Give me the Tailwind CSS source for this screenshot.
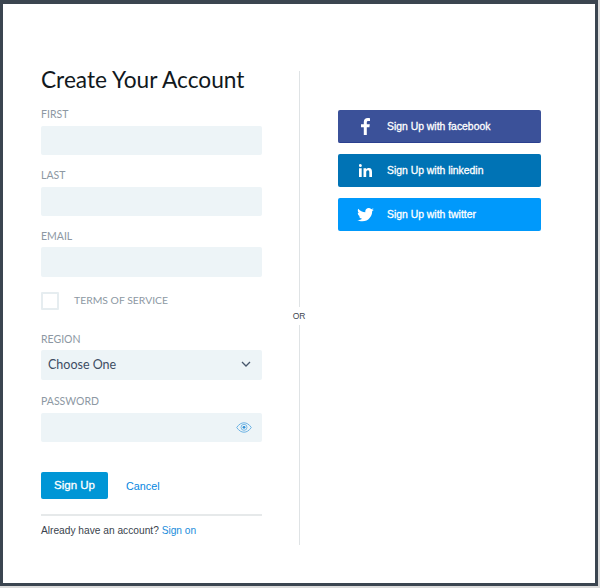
<!doctype html>
<html>
<head>
<meta charset="utf-8">
<title>Create Your Account</title>
<script src="https://cdn.jsdelivr.net/npm/@tailwindcss/browser@4"></script>
</head>
<body class="bg-[#dcdcdc] font-['Lato',sans-serif]">
<div class="w-[598px] h-[586px] border-x-[3px] border-t-4 border-b-[3px] border-[#3b4550] bg-white flex">
    <!-- form column -->
    <div class="w-[221px] ml-[38px] shrink-0">
        <h1 class="mt-[60px] h-[32px] leading-[32px] text-[22.700px] text-[#111820]">Create Your Account</h1>
        <label class="block mt-[11px] h-[15px] leading-[15px] text-[10.500px] text-[#8d98a3]">FIRST</label>
        <input type="text" class="block mt-[4px] w-full h-[29px] rounded-[2px] bg-[#edf4f7]">
        <label class="block mt-[13px] h-[15px] leading-[15px] text-[10.500px] text-[#8d98a3]">LAST</label>
        <input type="text" class="block mt-[4px] w-full h-[29px] rounded-[2px] bg-[#edf4f7]">
        <label class="block mt-[13px] h-[15px] leading-[15px] text-[10.500px] text-[#8d98a3]">EMAIL</label>
        <input type="text" class="block mt-[3px] w-full h-[30px] rounded-[2px] bg-[#edf4f7]">
        <div class="flex items-center mt-[15px] h-[18px]">
            <span class="w-[18px] h-[18px] border-2 border-[#e6edf0] rounded-[1px]"></span>
            <span class="ml-[15px] text-[10.400px] text-[#8d98a3]">TERMS OF SERVICE</span>
        </div>
        <label class="block mt-[22px] h-[15px] leading-[15px] text-[10.500px] text-[#8d98a3]">REGION</label>
        <div class="mt-[3px] h-[30px] rounded-[2px] bg-[#edf4f7] flex items-center justify-between pl-[7px] pr-[11px]">
            <span class="text-[12.500px] text-[#3d4d63]">Choose One</span>
            <svg width="10" height="6" viewBox="0 0 10 6" class="mb-[2px]"><path d="M1 1l4 4 4-4" fill="none" stroke="#46566b" stroke-width="1.3"/></svg>
        </div>
        <label class="block mt-[14px] h-[15px] leading-[15px] text-[10.500px] text-[#8d98a3]">PASSWORD</label>
        <div class="mt-[4px] h-[29px] rounded-[2px] bg-[#edf4f7] flex items-center justify-end pr-[10px]">
            <svg width="16" height="11" viewBox="0 0 16 11"><path d="M.7 5.500C3 2.200 5.400.8 8 .8s5 1.400 7.300 4.700C13 8.800 10.600 10.200 8 10.200S3 8.800.7 5.500z" fill="none" stroke="#6db3e4" stroke-width="1"/><circle cx="8" cy="5.300" r="3" fill="none" stroke="#6db3e4" stroke-width=".9"/><circle cx="8" cy="5.300" r="1.400" fill="#2f8fd6"/></svg>
        </div>
        <div class="flex items-center mt-[30px]">
            <button class="w-[67px] h-[27px] pt-px rounded-[2px] bg-[#0096d6] text-white text-[11.500px] [-webkit-text-stroke:0.3px_white] font-['Liberation_Sans',sans-serif]">Sign Up</button>
            <a class="ml-[18px] pt-px text-[#0587df] text-[10.800px] font-['Liberation_Sans',sans-serif]">Cancel</a>
        </div>
        <div class="mt-[15px] h-[2px] bg-[#e6e9ea]"></div>
        <p class="mt-[7px] text-[10.200px] leading-[15px] text-[#39434d] font-['Liberation_Sans',sans-serif]">Already have an account? <a class="text-[#1a8ddb]">Sign on</a></p>
    </div>
    <!-- divider -->
    <div class="w-[20px] ml-[27px] shrink-0 mt-[67px] h-[474px] flex flex-col items-center">
        <div class="w-px flex-1 bg-[#dfe3e5]"></div>
        <span class="py-[3px] text-[8.500px] leading-[12px] text-[#3d464f] font-['Liberation_Sans',sans-serif]">OR</span>
        <div class="w-px h-[220px] bg-[#dfe3e5]"></div>
    </div>
    <!-- social buttons -->
    <div class="w-[203px] ml-[29px] mt-[106px] flex flex-col gap-[11px] font-['Liberation_Sans',sans-serif] text-white text-[10.400px] [-webkit-text-stroke:0.3px_white]">
        <a class="h-[33px] rounded-[2px] bg-[#3b5199] border-b border-[#2a3f8f] flex items-center">
            <span class="w-[49px] flex justify-center pl-[6px]">
                <svg width="9" height="17" viewBox="0 0 9 17"><path d="M5.800 17V9.300h2.600l.4-3H5.800V4.400c0-.9.300-1.500 1.500-1.500H9V.2C8.700.1 7.700 0 6.700 0 4.400 0 2.800 1.400 2.800 4v2.300H0v3h2.800V17z" fill="#fff"/></svg>
            </span>
            <span class="mt-[2px]">Sign Up with facebook</span>
        </a>
        <a class="h-[33px] rounded-[2px] bg-[#0073b5] flex items-center">
            <span class="w-[49px] flex justify-center pl-[6px]">
                <svg width="13" height="13" viewBox="0 0 13 13"><path d="M0 4.300h2.700V13H0zM1.350 0a1.500 1.500 0 1 1 0 3 1.500 1.500 0 0 1 0-3zM4.500 4.300h2.600v1.200c.4-.8 1.400-1.400 2.800-1.400 2.600 0 3.100 1.700 3.100 4V13h-2.700V8.600c0-1 0-2.300-1.400-2.300s-1.700 1.100-1.700 2.200V13H4.500z" fill="#fff"/></svg>
            </span>
            <span class="mt-[1px]">Sign Up with linkedin</span>
        </a>
        <a class="h-[33px] rounded-[2px] bg-[#0099fb] flex items-center">
            <span class="w-[49px] flex justify-center pl-[6px]">
                <svg width="17" height="14" viewBox="0 0 24 20"><path d="M24 2.400c-.9.400-1.800.7-2.800.8 1-.6 1.800-1.600 2.200-2.700-1 .6-2 1-3.100 1.200C19.300.7 18 0 16.600 0c-2.700 0-4.900 2.200-4.900 4.900 0 .4 0 .8.100 1.100C7.700 5.800 4.100 3.900 1.700.9c-.4.700-.7 1.600-.7 2.500 0 1.700.9 3.200 2.200 4.100-.8 0-1.600-.2-2.200-.6v.1c0 2.400 1.700 4.400 3.900 4.800-.4.100-.8.200-1.300.2-.3 0-.6 0-.9-.1.600 2 2.400 3.400 4.600 3.400-1.700 1.300-3.800 2.100-6.100 2.100-.4 0-.8 0-1.200-.1C2.200 18.300 4.800 19.100 7.500 19.100c9.100 0 14-7.500 14-14v-.6c1-.7 1.800-1.500 2.500-2.100z" fill="#fff"/></svg>
            </span>
            <span class="mt-[1px]">Sign Up with twitter</span>
        </a>
    </div>
</div>
</body>
</html>
